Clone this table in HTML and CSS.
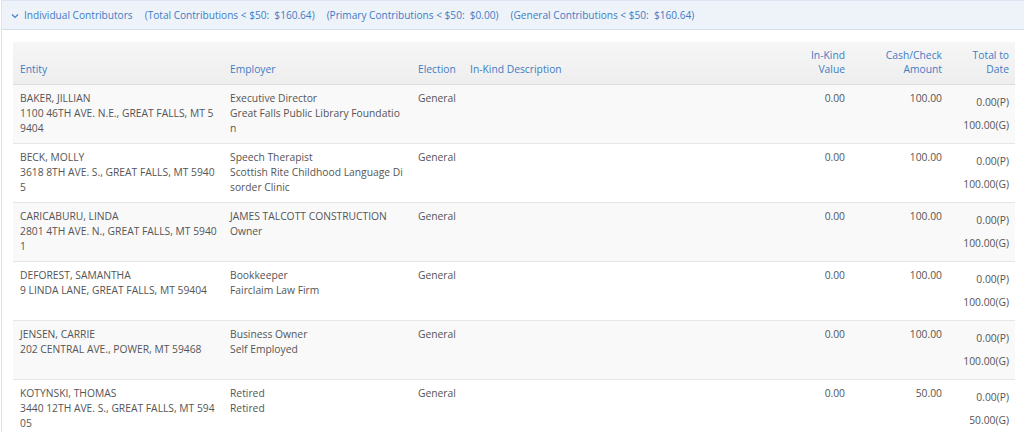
FILE: index.html
```html
<!DOCTYPE html>
<html>
<head>
<meta charset="utf-8">
<link rel="stylesheet" href="styles.css">
</head>
<body>
<div class="panel">
  <div class="panel-head">
    <svg class="chev" width="8" height="6" viewBox="0 0 8 6"><path d="M1 1.5 L4 4.5 L7 1.5" fill="none" stroke="#3f7cc4" stroke-width="1.1"/></svg>
    <span class="title">Individual Contributors</span>
    <span class="sum">(Total Contributions &lt; $50:&nbsp; $160.64)</span>
    <span class="sum">(Primary Contributions &lt; $50:&nbsp; $0.00)</span>
    <span class="sum">(General Contributions &lt; $50:&nbsp; $160.64)</span>
  </div>
  <div class="panel-body">
    <table class="grid">
      <colgroup>
        <col class="c-entity"><col class="c-emp"><col class="c-elec"><col class="c-desc"><col class="c-val"><col class="c-cash"><col class="c-total">
      </colgroup>
      <thead>
        <tr>
          <th>Entity</th>
          <th>Employer</th>
          <th>Election</th>
          <th>In-Kind Description</th>
          <th class="num">In-Kind<br>Value</th>
          <th class="num">Cash/Check<br>Amount</th>
          <th class="num">Total to<br>Date</th>
        </tr>
      </thead>
      <tbody>
        <tr>
          <td class="ent">BAKER, JILLIAN<br>1100 46TH AVE. N.E., GREAT FALLS, MT 59404</td>
          <td>Executive Director<br>Great Falls Public Library Foundation</td>
          <td>General</td><td></td>
          <td class="num">0.00</td><td class="num">100.00</td>
          <td class="num"><div class="tt">0.00(P)</div><div class="tt">100.00(G)</div></td>
        </tr>
        <tr>
          <td class="ent">BECK, MOLLY<br>3618 8TH AVE. S., GREAT FALLS, MT 59405</td>
          <td>Speech Therapist<br>Scottish Rite Childhood Language Disorder Clinic</td>
          <td>General</td><td></td>
          <td class="num">0.00</td><td class="num">100.00</td>
          <td class="num"><div class="tt">0.00(P)</div><div class="tt">100.00(G)</div></td>
        </tr>
        <tr>
          <td class="ent">CARICABURU, LINDA<br>2801 4TH AVE. N., GREAT FALLS, MT 59401</td>
          <td>JAMES TALCOTT CONSTRUCTION<br>Owner</td>
          <td>General</td><td></td>
          <td class="num">0.00</td><td class="num">100.00</td>
          <td class="num"><div class="tt">0.00(P)</div><div class="tt">100.00(G)</div></td>
        </tr>
        <tr>
          <td class="ent">DEFOREST, SAMANTHA<br>9 LINDA LANE, GREAT FALLS, MT 59404</td>
          <td>Bookkeeper<br>Fairclaim Law Firm</td>
          <td>General</td><td></td>
          <td class="num">0.00</td><td class="num">100.00</td>
          <td class="num"><div class="tt">0.00(P)</div><div class="tt">100.00(G)</div></td>
        </tr>
        <tr>
          <td class="ent">JENSEN, CARRIE<br>202 CENTRAL AVE., POWER, MT 59468</td>
          <td>Business Owner<br>Self Employed</td>
          <td>General</td><td></td>
          <td class="num">0.00</td><td class="num">100.00</td>
          <td class="num"><div class="tt">0.00(P)</div><div class="tt">100.00(G)</div></td>
        </tr>
        <tr>
          <td class="ent">KOTYNSKI, THOMAS<br>3440 12TH AVE. S., GREAT FALLS, MT 59405</td>
          <td>Retired<br>Retired</td>
          <td>General</td><td></td>
          <td class="num">0.00</td><td class="num">50.00</td>
          <td class="num"><div class="tt">0.00(P)</div><div class="tt">50.00(G)</div></td>
        </tr>
      </tbody>
    </table>
  </div>
</div>
</body>
</html>
```

FILE: styles.css
```css
html, body {
  margin: 0;
  padding: 0;
  background: #fff;
}
body {
  font-family: "Open Sans", "Liberation Sans", sans-serif;
  font-size: 10.3px;
  color: #555;
}
.panel {
  margin-left: 1px;
  border-left: 1px solid #dfe3e8;
}
.panel-head {
  height: 28px;
  background: #eef3fa;
  border-bottom: 1px solid #d3deec;
  border-top: 1px solid #dce5f1;
  display: flex;
  align-items: center;
  padding-left: 9px;
  color: #3f7cc4;
  white-space: nowrap;
  font-size: 10.1px;
}
.chev {
  margin-right: 5px;
  margin-top: 1px;
}
.title {
  font-size: 10.15px;
  margin-right: 12px;
}
.sum {
  margin-right: 12px;
}
.panel-body {
  padding: 12px 8px 0 11px;
}
.grid {
  width: 1002px;
  border-collapse: collapse;
  table-layout: fixed;
}
.c-entity { width: 210px; }
.c-emp { width: 188px; }
.c-elec { width: 52px; }
.c-desc { width: 317px; }
.c-val { width: 72px; }
.c-cash { width: 97px; }
.c-total { width: 66px; }
.grid th {
  background: linear-gradient(#f6f6f6, #eeeeee);
  color: #3f7cc4;
  font-weight: normal;
  text-align: left;
  vertical-align: bottom;
  line-height: 14px;
  padding: 6px 7px 8px 7px;
  border-bottom: 1px solid #dddddd;
}
.grid td {
  vertical-align: top;
  line-height: 15px;
  padding: 6px 7px 6px 7px;
  word-break: break-all;
  border-bottom: 1px solid #e6e6e6;
}
.grid td.ent {
  padding-right: 5px;
}
.grid tbody tr:nth-child(odd) td {
  background: #f9f9f9;
}
.grid .num {
  text-align: right;
}
.grid th.num:last-child,
.grid td.num:last-child {
  padding-right: 6px;
}
.tt {
  padding: 4px 0;
}
```
